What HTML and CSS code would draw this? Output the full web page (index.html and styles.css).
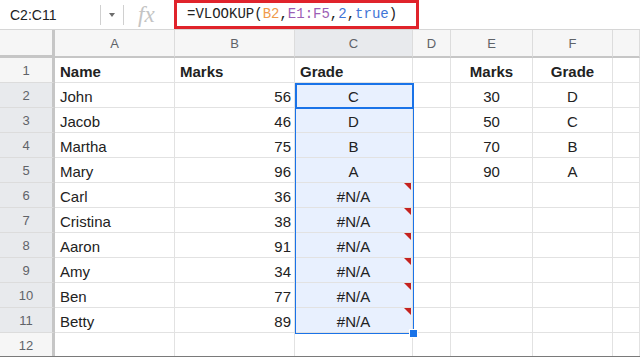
FILE: index.html
```html
<!DOCTYPE html>
<html>
<head>
<meta charset="utf-8">
<link rel="stylesheet" href="styles.css">
</head>
<body>
<div class="frame">
  <div class="fbar">
    <div class="namebox">C2:C11</div>
    <div class="sep"></div>
    <div class="dd"><span class="tri"></span></div>
    <div class="sep"></div>
    <div class="fx">fx</div>
    <div class="formula"><span>=VLOOKUP(</span><span class="r1">B2</span><span>,</span><span class="r2">E1:F5</span><span>,</span><span class="num">2</span><span>,</span><span class="num">true</span><span>)</span></div>
  </div>
  <div class="grid">
    <div class="h corner"></div><div class="h col">A</div><div class="h col">B</div><div class="h col sel">C</div><div class="h col">D</div><div class="h col">E</div><div class="h col">F</div><div class="h col"></div>

    <div class="h rh">1</div><div class="c b">Name</div><div class="c b">Marks</div><div class="c b">Grade</div><div class="c"></div><div class="c b ctr">Marks</div><div class="c b ctr">Grade</div><div class="c"></div>

    <div class="h rh sel">2</div><div class="c">John</div><div class="c rt">56</div><div class="c ctr rg">C</div><div class="c"></div><div class="c ctr">30</div><div class="c ctr">D</div><div class="c"></div>

    <div class="h rh sel">3</div><div class="c">Jacob</div><div class="c rt">46</div><div class="c ctr rg">D</div><div class="c"></div><div class="c ctr">50</div><div class="c ctr">C</div><div class="c"></div>

    <div class="h rh sel">4</div><div class="c">Martha</div><div class="c rt">75</div><div class="c ctr rg">B</div><div class="c"></div><div class="c ctr">70</div><div class="c ctr">B</div><div class="c"></div>

    <div class="h rh sel">5</div><div class="c">Mary</div><div class="c rt">96</div><div class="c ctr rg">A</div><div class="c"></div><div class="c ctr">90</div><div class="c ctr">A</div><div class="c"></div>

    <div class="h rh sel">6</div><div class="c">Carl</div><div class="c rt">36</div><div class="c ctr rg err">#N/A</div><div class="c"></div><div class="c"></div><div class="c"></div><div class="c"></div>

    <div class="h rh sel">7</div><div class="c">Cristina</div><div class="c rt">38</div><div class="c ctr rg err">#N/A</div><div class="c"></div><div class="c"></div><div class="c"></div><div class="c"></div>

    <div class="h rh sel">8</div><div class="c">Aaron</div><div class="c rt">91</div><div class="c ctr rg err">#N/A</div><div class="c"></div><div class="c"></div><div class="c"></div><div class="c"></div>

    <div class="h rh sel">9</div><div class="c">Amy</div><div class="c rt">34</div><div class="c ctr rg err">#N/A</div><div class="c"></div><div class="c"></div><div class="c"></div><div class="c"></div>

    <div class="h rh sel">10</div><div class="c">Ben</div><div class="c rt">77</div><div class="c ctr rg err">#N/A</div><div class="c"></div><div class="c"></div><div class="c"></div><div class="c"></div>

    <div class="h rh sel">11</div><div class="c">Betty</div><div class="c rt">89</div><div class="c ctr rg err">#N/A</div><div class="c"></div><div class="c"></div><div class="c"></div><div class="c"></div>

    <div class="h rh">12</div><div class="c"></div><div class="c"></div><div class="c"></div><div class="c"></div><div class="c"></div><div class="c"></div><div class="c"></div>

    <div class="range"></div>
    <div class="active"></div>
    <div class="handle"></div>
  </div>
</div>
</body>
</html>
```

FILE: styles.css
```css
* { box-sizing: border-box; }
html, body { margin: 0; padding: 0; background: #fff; }
body { font-family: "Liberation Sans", Arial, sans-serif; color: #222; }

.frame {
  width: 640px;
  height: 357px;
  overflow: hidden;
  border-bottom: 1px solid #7a7a7a;
  position: relative;
}

.fbar {
  height: 30px;
  display: flex;
  align-items: center;
  border-bottom: 1px solid #d6d6d6;
}
.namebox {
  width: 100px;
  padding-left: 10px;
  font-size: 14px;
  color: #202124;
}
.sep {
  width: 1px;
  height: 20px;
  background: #d0d0d0;
}
.dd {
  width: 22px;
  display: flex;
  justify-content: center;
}
.tri {
  width: 0; height: 0;
  border-left: 3.5px solid transparent;
  border-right: 3.5px solid transparent;
  border-top: 4px solid #6d6d6d;
}
.fx {
  width: 50px;
  padding-left: 14px;
  font-family: "Liberation Serif", "Times New Roman", serif;
  font-style: italic;
  font-size: 23px;
  color: #c4c4c4;
  line-height: 28px;
}
.formula {
  width: 245px;
  height: 29px;
  margin-top: -1px;
  border: 3px solid #e0232b;
  padding-left: 10px;
  display: flex;
  align-items: center;
  font-family: "Liberation Mono", "DejaVu Sans Mono", monospace;
  font-size: 14px;
  color: #222;
  white-space: pre;
}
.r1 { color: #f09a4a; }
.r2 { color: #9c5fb5; }
.num { color: #3f75d6; }

.grid {
  position: relative;
  display: grid;
  grid-template-columns: 55px 120px 120px 118px 38px 82px 80px 27px;
  grid-template-rows: 28px repeat(12, 25px);
}

.h {
  background: #f6f6f6;
  color: #5f6368;
  font-size: 13px;
  display: flex;
  align-items: center;
  justify-content: center;
  border-right: 1px solid #dcdcdc;
  border-bottom: 1px solid #dcdcdc;
}
.h.sel { background: #e8eaed; }
.col { border-bottom: 2px solid #c6c6c6; }
.corner {
  border-right: 3px solid #c6c6c6;
  border-bottom: 3px solid #c6c6c6;
}
.rh { border-right: 3px solid #c6c6c6; }

.c {
  position: relative;
  font-size: 15px;
  line-height: 25px;
  padding: 1px 4px 0 5px;
  border-right: 1px solid #e2e2e2;
  border-bottom: 1px solid #e2e2e2;
  white-space: nowrap;
}
.b { font-weight: bold; }
.ctr { text-align: center; padding-left: 0; padding-right: 0; }
.rt { text-align: right; padding-right: 3px; }
.rg { background: #e8f0fe; }
.err::after {
  content: "";
  position: absolute;
  top: 0;
  right: 1px;
  width: 0; height: 0;
  border-top: 7px solid #c5221f;
  border-left: 7px solid transparent;
}

.range {
  position: absolute;
  left: 295px;
  top: 53px;
  width: 119px;
  height: 251px;
  border: 1px solid #1a73e8;
  pointer-events: none;
}
.active {
  position: absolute;
  left: 295px;
  top: 53px;
  width: 119px;
  height: 26px;
  border: 2px solid #1a73e8;
}
.handle {
  position: absolute;
  left: 409px;
  top: 299px;
  width: 9px;
  height: 9px;
  background: #1a73e8;
  border: 1px solid #fff;
}
```
